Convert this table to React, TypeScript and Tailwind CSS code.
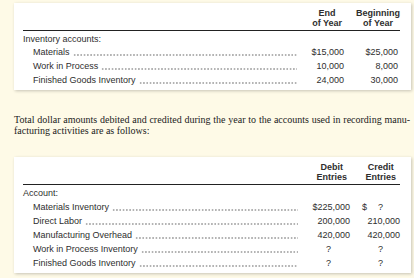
const sans = { fontFamily: '"Liberation Sans", Arial, sans-serif' }

type Cell = { text: string; pr: string }

function Leaders() {
  return (
    <span className="ml-[3px] mr-[1px] min-w-0 flex-1 bg-[radial-gradient(circle,#6a6a6a_0.45px,transparent_0.85px)] bg-[length:3.3px_2px] bg-[position:0_9px] bg-repeat-x" />
  )
}

function HeadCell({ lines, w, pr }: { lines: string[]; w: string; pr: string }) {
  return (
    <div className={`flex shrink-0 justify-end ${w} ${pr}`}>
      <div className="text-center font-bold">
        {lines.map((l) => (
          <div key={l}>{l}</div>
        ))}
      </div>
    </div>
  )
}

function Table({
  heads,
  widths,
  heading,
  headingLeading,
  rows,
}: {
  heads: { lines: string[]; pr: string }[]
  widths: string[]
  heading: string
  headingLeading: string
  rows: { label: string; cells: (Cell | 'dollarQ')[] }[]
}) {
  return (
    <div
      className="ml-[14px] w-[397px] bg-white pb-[3px] pl-[9px] pr-[11px] pt-[5px] text-[9px] text-[#2e2e2e] shadow-[1px_1px_3px_rgba(0,0,0,0.22)]"
      style={sans}
    >
      <div className="flex border-b border-[#222] pb-[2px] leading-[10px]">
        <div className="flex-1" />
        {heads.map((h, i) => (
          <HeadCell key={i} lines={h.lines} w={widths[i]} pr={h.pr} />
        ))}
      </div>
      <div className={`pt-[2px] ${headingLeading}`}>{heading}</div>
      {rows.map((r) => (
        <div key={r.label} className="flex leading-[14px]">
          <div className="flex min-w-0 flex-1 pl-[10px] pr-[1px]">
            <span className="whitespace-nowrap">{r.label}</span>
            <Leaders />
          </div>
          {r.cells.map((c, i) =>
            c === 'dollarQ' ? (
              <div key={i} className={`flex shrink-0 justify-end gap-[11px] pr-[17px] ${widths[i]}`}>
                <span>$</span>
                <span>?</span>
              </div>
            ) : (
              <div key={i} className={`shrink-0 text-right ${widths[i]} ${c.pr}`}>
                {c.text}
              </div>
            ),
          )}
        </div>
      ))}
    </div>
  )
}

export default function App() {
  return (
    <div className="h-[278px] w-[414px] overflow-hidden bg-[#fefae7] pt-[3px]">
      <Table
        heads={[
          { lines: ['End', 'of Year'], pr: 'pr-[2px]' },
          { lines: ['Beginning', 'of Year'], pr: 'pr-0' },
        ]}
        widths={['w-[45px]', 'w-[56px]']}
        heading="Inventory accounts:"
        headingLeading="leading-[12px]"
        rows={[
          { label: 'Materials', cells: [{ text: '$15,000', pr: 'pr-0' }, { text: '$25,000', pr: 'pr-[2px]' }] },
          { label: 'Work in Process', cells: [{ text: '10,000', pr: 'pr-0' }, { text: '8,000', pr: 'pr-[2px]' }] },
          {
            label: 'Finished Goods Inventory',
            cells: [{ text: '24,000', pr: 'pr-0' }, { text: '30,000', pr: 'pr-[2px]' }],
          },
        ]}
      />

      <div
        className="ml-[14px] mt-[24px] w-[396px] text-[10px] leading-[11px] text-[#222]"
        style={{ fontFamily: '"Liberation Serif", "Times New Roman", serif' }}
      >
        <div className="whitespace-nowrap [text-align-last:justify]">
          Total dollar amounts debited and credited during the year to the accounts used in recording manu-
        </div>
        <div>facturing activities are as follows:</div>
      </div>

      <div className="mt-[21px]">
        <Table
          heads={[
            { lines: ['Debit', 'Entries'], pr: 'pr-[3px]' },
            { lines: ['Credit', 'Entries'], pr: 'pr-[4px]' },
          ]}
          widths={['w-[50px]', 'w-[50px]']}
          heading="Account:"
          headingLeading="leading-[13px]"
          rows={[
            { label: 'Materials Inventory', cells: [{ text: '$225,000', pr: 'pr-0' }, 'dollarQ'] },
            { label: 'Direct Labor', cells: [{ text: '200,000', pr: 'pr-0' }, { text: '210,000', pr: 'pr-0' }] },
            {
              label: 'Manufacturing Overhead',
              cells: [{ text: '420,000', pr: 'pr-0' }, { text: '420,000', pr: 'pr-0' }],
            },
            {
              label: 'Work in Process Inventory',
              cells: [{ text: '?', pr: 'pr-[19px]' }, { text: '?', pr: 'pr-[17px]' }],
            },
            {
              label: 'Finished Goods Inventory',
              cells: [{ text: '?', pr: 'pr-[19px]' }, { text: '?', pr: 'pr-[17px]' }],
            },
          ]}
        />
      </div>
    </div>
  )
}
